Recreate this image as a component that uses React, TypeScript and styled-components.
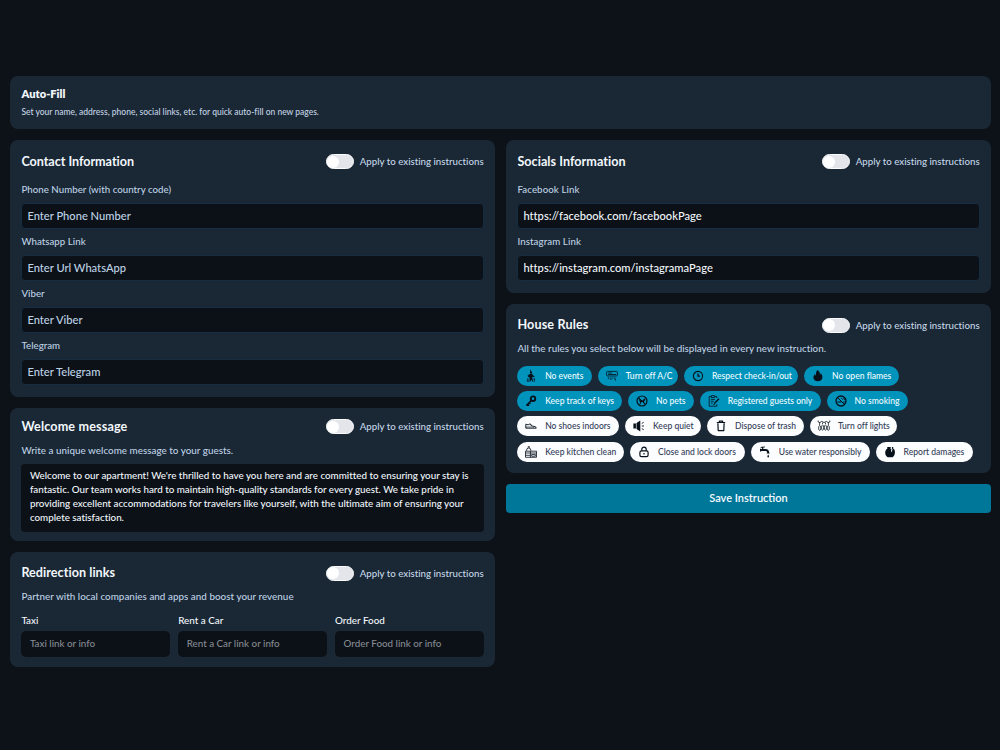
import React from 'react';
import styled, { createGlobalStyle } from 'styled-components';

const GlobalStyle = createGlobalStyle`
  * { box-sizing: border-box; }
  body {
    margin: 0;
    background: #0d1118;
    color: #f2f7fc;
    font-family: Lato, "Liberation Sans", sans-serif;
    font-variant-ligatures: none;
    overflow: hidden;
  }
`;

const Page = styled.main`
  width: 1000px;
  height: 750px;
  padding: 75.7px 9px 0 10px;
`;

const Card = styled.section<{ $height: number }>`
  height: ${p => p.$height}px;
  padding: 0 11.4px;
  border-radius: 8px;
  background: #1a2734;
`;

const Columns = styled.div`
  display: grid;
  grid-template-columns: 1fr 1fr;
  gap: 11px;
  margin-top: 11.3px;
`;

const Column = styled.div`
  display: flex;
  flex-direction: column;
  gap: 11.3px;
`;

const Line = styled.span<{ $ls?: number }>`
  letter-spacing: ${p => p.$ls ?? 0}px;
  white-space: nowrap;
`;

const BannerTitle = styled.h1`
  margin: 0;
  padding-top: 10px;
  font-size: 11.1px;
  line-height: 16px;
  font-weight: 800;
`;

const BannerText = styled.p`
  margin: 0;
  padding-top: 3px;
  font-size: 8.5px;
  line-height: 15px;
  font-weight: 500;
  color: #c3d4e4;
`;

const Head = styled.header<{ $top: number }>`
  display: flex;
  align-items: center;
  justify-content: space-between;
  height: 30px;
  margin-top: ${p => p.$top}px;
`;

const CardShell = styled(Card)`
  display: flow-root;
`;

const Title = styled.h2`
  margin: 0;
  padding-top: 1px;
  font-size: 12.6px;
  line-height: 18px;
  font-weight: 700;
`;

const ToggleLabel = styled.label`
  display: flex;
  align-items: center;
  gap: 6px;
  font-size: 9.7px;
  font-weight: 500;
  line-height: 14px;
  color: #c3d6e8;
`;

const Track = styled.span`
  display: flex;
  align-items: center;
  width: 28px;
  height: 15px;
  margin-top: 1px;
  padding: 1px;
  border-radius: 8px;
  background: #e3e5ea;
  border: 1px solid #fbfcfd;
`;

const Knob = styled.span`
  width: 12px;
  height: 12px;
  margin-left: -1px;
  border-radius: 50%;
  background: #fff;
`;

const Label = styled.div`
  height: 26px;
  font-size: 9.7px;
  font-weight: 500;
  line-height: 24.6px;
  color: #bed2e5;
`;

const Field = styled.div<{ $filled?: boolean }>`
  height: 26px;
  padding-left: 5px;
  border: 1px solid #142d40;
  border-radius: 4px;
  background: #0c1118;
  font-size: 11.15px;
  font-weight: 500;
  line-height: 24px;
  color: ${p => (p.$filled ? '#f2f6fa' : '#bfd3e6')};
`;

const Fields = styled.div`
  padding-top: 0.6px;
`;

const Description = styled.p<{ $height: number; $offset?: number }>`
  height: ${p => p.$height}px;
  margin: 0;
  padding-top: ${p => p.$offset ?? 0}px;
  font-size: 9.85px;
  font-weight: 500;
  line-height: 17px;
  color: #bed2e5;
`;

const Message = styled.div`
  height: 67.5px;
  padding: 4px 8.5px;
  border-radius: 4px;
  background: #0c1118;
  font-size: 9.8px;
  font-weight: 500;
  line-height: 14px;
  white-space: nowrap;
`;

const LinkGrid = styled.div`
  display: grid;
  grid-template-columns: repeat(3, 1fr);
  gap: 8.3px;
`;

const LinkLabel = styled.div`
  height: 18px;
  font-size: 9.85px;
  font-weight: 500;
  line-height: 15px;
`;

const LinkField = styled.div`
  height: 26px;
  padding-left: 8.5px;
  border-radius: 5px;
  background: #0c1118;
  color: #858a91;
  font-size: 9.8px;
  font-weight: 500;
  line-height: 24px;
`;

const Rules = styled.div`
  display: flex;
  flex-direction: column;
  gap: 5.4px;
`;

const RuleRow = styled.div`
  display: flex;
  gap: 5.8px;
`;

const Pill = styled.div<{ $width: number; $on?: boolean }>`
  display: flex;
  align-items: center;
  flex: none;
  width: ${p => p.$width}px;
  height: 20px;
  padding-left: 7px;
  gap: 6.8px;
  border-radius: 10px;
  background: ${p => (p.$on ? '#0093bc' : '#fcfdff')};
  color: ${p => (p.$on ? '#f2fcff' : '#333c58')};
  font-size: 8.55px;
  font-weight: 500;
  line-height: 18px;

  svg { flex: none; color: #05101a; }
`;

const SaveButton = styled.button`
  height: 28.5px;
  padding: 0 0 1px;
  border: 0;
  border-radius: 4px;
  background: #007698;
  color: #f4fbff;
  font: 600 11px/26px Lato, "Liberation Sans", sans-serif;
`;

const paths: Record<string, React.ReactNode> = {
  events: <g stroke="none" fill="currentColor"><circle cx="7" cy="3.4" r="1.1" /><path d="M5.4 5 8 4.6 9 6.4 10.6 7 10.2 7.9 8.4 7.7 8.3 9.3 9.2 12.4H8.2L7 10.2 6.5 12.4H5.4L5.6 8.4 4 7.8 3.7 5.8 4.4 5.6 4.7 6.8Z" /><path d="M6.2 .8H7V2.4H6.2ZM3.4 9.2H4.3V11.7H5V12.4H2.8V11.7H3.4Z" /><path d="M9.4 9.4h1.6v1l-.5.3v1.2h.6v.5H9.5v-.5h.5v-1.2l-.6-.3Z" /></g>,
  ac: <g strokeWidth=".8"><rect x="1.6" y="2.4" width="10.8" height="4.6" rx="1" /><path d="M3 5.5H11M3.2 4H7M3.8 8.3V9.6H2.8M5.9 8.4V11M7.9 8.4V9.8M10 8.4V11H11" /></g>,
  clock: <><circle cx="7" cy="7" r="4.6" strokeWidth="1.1" /><path d="M7 4.6V7.2H9" strokeWidth="1.2" /></>,
  flame: <path stroke="none" fill="currentColor" d="M6.4 1C9 2.6 9.1 4.5 8.8 5.6 9.6 5.3 9.7 4.5 9.7 3.9 11 5.4 11.7 7.1 11.3 9 10.9 11.2 9 12.3 6.8 12.3 4.3 12.3 2.5 10.8 2.4 8.6 2.3 7 3.2 5.9 4 4.9 4.2 6 4.5 6.3 4.9 6.5 4.8 4.8 5 2.7 6.4 1Z" />,
  key: <><circle cx="9" cy="4.7" r="2.3" strokeWidth="1.8" /><path strokeWidth="1.5" d="M7.2 6.6 2.4 11.6M3.7 10.2 5.1 11.6M5.3 8.6 6.5 9.8" /></>,
  pets: <><circle cx="7" cy="7" r="5" strokeWidth="1.2" /><path d="M3.5 3.5 10.5 10.5" /><path stroke="none" fill="currentColor" d="M3.6 5.8 4.8 5.1 6 6.4 8 6.2 9.2 4.2 9.7 5 10.6 5.4 9.8 6.5 9.1 6.9 9.6 9.7H8.8L8 7.9 6.4 8 5.4 10.2H4.6L5 8.2 4.4 6.4Z" /></>,
  register: <><path d="M9.8 4V2.6H8M4 2.6H2.2V12.2H9.8V10.2M4.4 1.6H7.6V3.5H4.4ZM3.8 5.4H8M3.8 7.2H6.7M3.8 9H5.8" strokeWidth=".8" /><path strokeWidth="1.3" d="M7.2 9.5 12 4.7" /><path d="M6.3 10.5 7.8 10.2" /></>,
  smoking: <><circle cx="7" cy="7" r="5" strokeWidth="1.3" /><path d="M3.6 3.6 10.4 10.4M3.3 8H7.4M9.2 8H10.8" /><path strokeWidth=".8" d="M7.4 3.9C7.2 4.9 8.6 4.8 8.8 5.8M9.2 4.4C10.2 4.6 10.6 5.2 10.5 6" /></>,
  shoe: <g strokeWidth=".9"><path d="M1.8 5.2 4.2 5.8 6 4.8 8.5 7 11.8 7.9 12.2 9.2H1.8Z" /><path d="M1.8 8H8.8L10 8.6M5.8 6.2 7 5.5M6.8 7.1 8 6.4" strokeWidth=".6" /></g>,
  speaker: <><path stroke="none" fill="currentColor" d="M1.4 4.4H3.9V9.6H1.4ZM4.5 4.1 8.3 1.5V12.5L4.5 9.9Z" /><path strokeWidth=".9" d="M9.8 4.4 11.7 3.3M9.8 7H12M9.8 9.6 11.7 10.7" /></>,
  trash: <path strokeWidth="1.2" d="M3.9 4.2 4.2 11.6H9.8L10.1 4.2M2.8 3.5H11.2M5.4 3.2V2.2H8.6V3.2" />,
  lights: <g strokeWidth=".75"><path d="M1.2 1.5V3Q3 4.5 4.8 2.3 7 5 9.2 2.3 11 4.5 12.8 3V1.5M2.6 3.4V6M5.5 3.5V5M8.5 3.5V5M11.4 3.4V6" /><ellipse cx="2.7" cy="9" rx="1.1" ry="2.5" /><ellipse cx="5.6" cy="8.6" rx="1.1" ry="2.6" /><ellipse cx="8.4" cy="8.6" rx="1.1" ry="2.6" /><ellipse cx="11.3" cy="9" rx="1.1" ry="2.5" /></g>,
  kitchen: <g strokeWidth=".8"><path d="M1.5 12.3V6.2H12.5V12.3ZM1.5 8H12.5M6.4 6.2V12.3M1.5 10.3H6.4M2.4 5.8Q2.5 3 4.7 3T7 5.8M4.1 2.7V1.7H5.5V2.7M7.7 9.4H11.3V11.2H7.7Z" /></g>,
  lock: <><rect x="2.9" y="5.9" width="8.2" height="5.8" rx="1.6" strokeWidth="1.2" /><path strokeWidth="1.2" d="M4.8 5.7V4.3a2.2 2.2 0 0 1 4.4 0V5.7M7 8V9.6" /></>,
  faucet: <g stroke="none" fill="currentColor"><path d="M2.6 1.9 6.8 1.5V2.4L5.3 2.6V4.1H7.2C10 4.1 11.2 5.4 11.2 8H9.2C9.2 6.6 8.6 6.1 7.2 6.1H3.2V6.6H2V3.7H3.2V4.1H4.1V2.7L2.6 2.8Z" /><path d="M8.7 7.7H11.6V8.6H8.7ZM10.2 9.4C11.5 11.3 11.1 12.4 10.2 12.4S8.9 11.3 10.2 9.4Z" /></g>,
  pot: <path stroke="none" fill="currentColor" d="M4.2 1.9H7.9L7.3 3.2 8.5 4.6 7.9 6 9.2 7.4 8.9 5.9 9.6 4.4 8.7 3 9.1 1.9H10.2V3.5C11.6 4.5 12.1 6 11.9 7.9 11.7 9.8 10.9 11.4 9.5 12.2H4.6C3 11.1 2.2 9.5 2.2 7.8 2.2 5.8 3 4.4 4.4 3.5Z" />,
};

const Icon = ({ name }: { name: string }) => (
  <svg width="14" height="14" viewBox="0 0 14 14" fill="none" stroke="currentColor" strokeWidth="1" strokeLinejoin="round">
    {paths[name]}
  </svg>
);

type Rule = { icon: string; text: string; width: number };

const activeRules: Rule[][] = [
  [
    { icon: 'events', text: 'No events', width: 74.7 },
    { icon: 'ac', text: 'Turn off A/C', width: 80.5 },
    { icon: 'clock', text: 'Respect check-in/out', width: 114.3 },
    { icon: 'flame', text: 'No open flames', width: 95 },
  ],
  [
    { icon: 'key', text: 'Keep track of keys', width: 105 },
    { icon: 'pets', text: 'No pets', width: 66 },
    { icon: 'register', text: 'Registered guests only', width: 121 },
    { icon: 'smoking', text: 'No smoking', width: 81.5 },
  ],
];

const idleRules: Rule[][] = [
  [
    { icon: 'shoe', text: 'No shoes indoors', width: 102 },
    { icon: 'speaker', text: 'Keep quiet', width: 76.3 },
    { icon: 'trash', text: 'Dispose of trash', width: 97 },
    { icon: 'lights', text: 'Turn off lights', width: 87 },
  ],
  [
    { icon: 'kitchen', text: 'Keep kitchen clean', width: 107 },
    { icon: 'lock', text: 'Close and lock doors', width: 115 },
    { icon: 'faucet', text: 'Use water responsibly', width: 119 },
    { icon: 'pot', text: 'Report damages', width: 97.7 },
  ],
];

const CardHead = ({ title, top = 6, ls }: { title: string; top?: number; ls?: number }) => (
  <Head $top={top}>
    <Title><Line $ls={ls}>{title}</Line></Title>
    <ToggleLabel>
      <Track><Knob /></Track>
      <Line>Apply to existing instructions</Line>
    </ToggleLabel>
  </Head>
);

const RuleRows = ({ rows, on }: { rows: Rule[][]; on?: boolean }) => (
  <>
    {rows.map((row, i) => (
      <RuleRow key={i}>
        {row.map(r => (
          <Pill key={r.text} $width={r.width} $on={on}>
            <Icon name={r.icon} />
            <Line>{r.text}</Line>
          </Pill>
        ))}
      </RuleRow>
    ))}
  </>
);

const contactFields = [
  ['Phone Number (with country code)', 'Enter Phone Number'],
  ['Whatsapp Link', 'Enter Url WhatsApp'],
  ['Viber', 'Enter Viber'],
  ['Telegram', 'Enter Telegram'],
];

const socialFields = [
  ['Facebook Link', 'https://facebook.com/facebookPage'],
  ['Instagram Link', 'https://instagram.com/instagramaPage'],
];

const linkFields = [
  ['Taxi', 'Taxi link or info'],
  ['Rent a Car', 'Rent a Car link or info'],
  ['Order Food', 'Order Food link or info'],
];

const messageLines = [
  "Welcome to our apartment! We're thrilled to have you here and are committed to ensuring your stay is",
  'fantastic. Our team works hard to maintain high-quality standards for every guest. We take pride in',
  'providing excellent accommodations for travelers like yourself, with the ultimate aim of ensuring your',
  'complete satisfaction.',
];

export default function App() {
  return (
    <>
      <GlobalStyle />
      <Page>
        <Card $height={53.3}>
          <BannerTitle><Line>Auto-Fill</Line></BannerTitle>
          <BannerText><Line>Set your name, address, phone, social links, etc. for quick auto-fill on new pages.</Line></BannerText>
        </Card>
        <Columns>
          <Column>
            <CardShell $height={256.5}>
              <CardHead title="Contact Information" ls={-0.04} />
              <Fields>
                {contactFields.map(([label, value]) => (
                  <React.Fragment key={label}>
                    <Label><Line $ls={0.03}>{label}</Line></Label>
                    <Field><Line>{value}</Line></Field>
                  </React.Fragment>
                ))}
              </Fields>
            </CardShell>
            <CardShell $height={132.7}>
              <CardHead title="Welcome message" top={3} ls={0.15} />
              <Description $height={23.3} $offset={0.8}><Line $ls={0.02}>Write a unique welcome message to your guests.</Line></Description>
              <Message>
                {messageLines.map(line => <div key={line}>{line}</div>)}
              </Message>
            </CardShell>
            <CardShell $height={115}>
              <CardHead title="Redirection links" top={5.5} ls={0.04} />
              <Description $height={25}><Line $ls={0.03}>Partner with local companies and apps and boost your revenue</Line></Description>
              <LinkGrid>
                {linkFields.map(([label, value]) => (
                  <div key={label}>
                    <LinkLabel>{label}</LinkLabel>
                    <LinkField>{value}</LinkField>
                  </div>
                ))}
              </LinkGrid>
            </CardShell>
          </Column>
          <Column>
            <CardShell $height={152.5}>
              <CardHead title="Socials Information" ls={0.04} />
              <Fields>
                {socialFields.map(([label, value]) => (
                  <React.Fragment key={label}>
                    <Label><Line $ls={0.1}>{label}</Line></Label>
                    <Field $filled><Line>{value}</Line></Field>
                  </React.Fragment>
                ))}
              </Fields>
            </CardShell>
            <CardShell $height={168.7}>
              <CardHead title="House Rules" top={5.5} ls={0.15} />
              <Description $height={26}><Line>All the rules you select below will be displayed in every new instruction.</Line></Description>
              <Rules>
                <RuleRows rows={activeRules} on />
                <RuleRows rows={idleRules} />
              </Rules>
            </CardShell>
            <SaveButton>Save Instruction</SaveButton>
          </Column>
        </Columns>
      </Page>
    </>
  );
}
